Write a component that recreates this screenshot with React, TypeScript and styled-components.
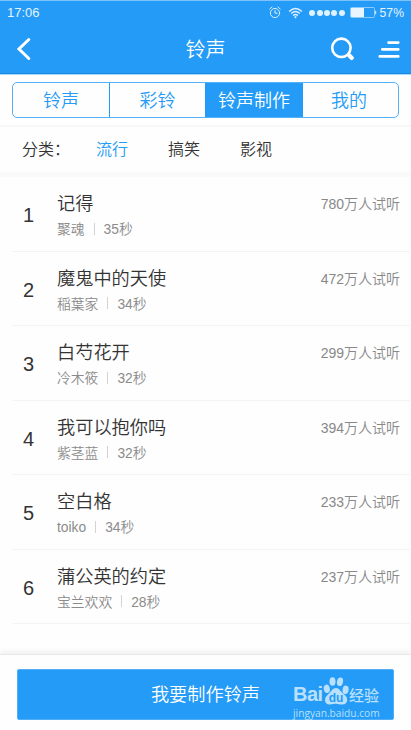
import React from 'react';
import styled, { createGlobalStyle } from 'styled-components';

const BLUE = '#249bf7';

const GlobalStyle = createGlobalStyle`
  *, *::before, *::after { box-sizing: border-box; }
  body { margin: 0; background: #fefefe; overflow: hidden; }
  button { font: inherit; border: 0; padding: 0; background: none; color: inherit; }
`;

const Screen = styled.div`
  width: 411px;
  height: 730px;
  display: flex;
  flex-direction: column;
  background: #fefefe;
  color: #333;
  font-family: 'Liberation Sans', 'Noto Sans CJK SC', sans-serif;
  font-weight: 350;
`;

const TopArea = styled.header`
  flex: none;
  height: 75px;
  background: ${BLUE};
  color: #fff;
  border-top: 1px solid #7cc3fb;
  border-bottom: 1px solid #a5d6fc;
  box-shadow: inset 0 -1px 0 #1b8ae4;
`;

const StatusBar = styled.div`
  height: 23px;
  display: flex;
  align-items: center;
  padding: 0 7px;
  font-size: 12.2px;
  font-weight: 400;
  color: #e4f3ff;
`;

const Clock = styled.span`
  flex: 1;
  font-size: 13px;
  line-height: 23px;
`;

const AlarmIcon = styled.svg`
  width: 12px;
  height: 13px;
  margin-right: 7px;
`;

const WifiIcon = styled.svg`
  width: 15px;
  height: 12px;
  margin-right: 6px;
`;

const Signal = styled.span`
  display: flex;
  gap: 1.3px;
  margin-right: 5px;
`;

const SignalDot = styled.i`
  width: 6px;
  height: 6px;
  border-radius: 50%;
  background: #e0f2ff;
`;

const BatteryIcon = styled.svg`
  width: 27px;
  height: 11px;
  margin-right: 3px;
`;

const NavBar = styled.div`
  height: 50px;
  display: grid;
  grid-template-columns: 80px 1fr 80px;
  align-items: center;
  padding: 0 11px 0 16px;
`;

const BackIcon = styled.svg`
  display: block;
  width: 16px;
  height: 24px;
`;

const Title = styled.h1`
  margin: 2px 0 0 -5px;
  text-align: center;
  font-size: 20px;
  font-weight: 350;
  line-height: 28px;
`;

const NavActions = styled.div`
  display: flex;
  justify-content: flex-end;
  align-items: center;
  gap: 22px;
`;

const SearchIcon = styled.svg`
  display: block;
  width: 25px;
  height: 24px;
`;

const MenuIcon = styled.svg`
  display: block;
  width: 23px;
  height: 20px;
`;

const TabBar = styled.nav`
  flex: none;
  height: 52px;
  padding: 7px 12px 0;
  border-bottom: 2px solid #f7f7f7;
`;

const TabGroup = styled.div`
  height: 36px;
  width: 387px;
  display: grid;
  grid-template-columns: 96px 96px 97px 1fr;
  border: 1px solid #55b2f9;
  border-radius: 5px;
  overflow: hidden;
`;

const Tab = styled.button<{ $active?: boolean }>`
  font-size: 18px;
  line-height: 32px;
  padding-top: 2px;
  color: ${({ $active }) => ($active ? '#fff' : BLUE)};
  background: ${({ $active }) => ($active ? BLUE : 'transparent')};
  & + & { border-left: 1px solid ${BLUE}; }
  &:last-child { padding-right: 3px; }
`;

const Categories = styled.nav`
  flex: none;
  height: 50px;
  display: flex;
  padding: 11px 22px 0;
  font-size: 16px;
  line-height: 24px;
  border-bottom: 5px solid #fafafa;
`;

const CategoryLabel = styled.span`
  width: 74px;
`;

const Category = styled.button<{ $active?: boolean }>`
  width: 72px;
  height: 24px;
  text-align: left;
  color: ${({ $active }) => ($active ? BLUE : 'inherit')};
`;

const SongList = styled.ol`
  flex: 1;
  margin: 0;
  padding: 0 1px 0 12px;
  list-style: none;
`;

const SongRow = styled.li`
  height: 74.5px;
  display: grid;
  grid-template-columns: 45px 1fr auto;
  padding-right: 10px;
  border-bottom: 1px solid #f4f4f4;
`;

const Rank = styled.span`
  padding: 22px 0 0 11px;
  font-size: 20px;
  line-height: 32px;
`;

const SongName = styled.h2`
  margin: 14px 0 0;
  font-size: 18.2px;
  font-weight: 350;
  line-height: 26px;
`;

const Meta = styled.div`
  display: flex;
  align-items: center;
  height: 25px;
  font-size: 13.8px;
  line-height: 25px;
  color: #8b8b8b;
`;

const Divider = styled.i`
  width: 1px;
  height: 12px;
  margin: -2px 9px 0;
  background: #d3d3d3;
`;

const Plays = styled.span`
  padding-top: 15px;
  font-size: 14px;
  line-height: 25px;
  color: #888;
`;

const Footer = styled.footer`
  position: relative;
  flex: none;
  height: 76px;
  padding: 14px 17px 0;
  border-top: 1px solid #e8e8e8;
  box-shadow: 0 -3px 5px rgba(0, 0, 0, 0.05);
`;

const MakeButton = styled.button`
  display: block;
  width: 377px;
  height: 51px;
  border: 1px solid #50aef8;
  border-radius: 2px;
  background: ${BLUE};
  color: #fff;
  font-size: 18.2px;
  line-height: 48px;
  padding-top: 1px;
`;

const Watermark = styled.div`
  position: absolute;
  left: 293px;
  top: 20px;
  width: 92px;
  color: #b9e0fd;
  font-weight: 400;
  pointer-events: none;
`;

const Brand = styled.div`
  display: flex;
  align-items: flex-end;
  height: 31px;
`;

const BrandLatin = styled.span`
  flex: none;
  width: 31px;
  font-family: 'Liberation Sans', sans-serif;
  font-size: 20px;
  letter-spacing: -0.5px;
  font-weight: 700;
  line-height: 23px;
`;

const BrandHan = styled.span`
  font-size: 15px;
  font-weight: 500;
  line-height: 20px;
  white-space: nowrap;
`;

const Paw = styled.svg`
  flex: none;
  width: 26px;
  height: 29px;
  margin: 0 0 1px -1px;
`;

const SiteAddress = styled.div`
  font-family: 'Open Sans', sans-serif;
  font-size: 10.2px;
  line-height: 14px;
  white-space: nowrap;
`;

const songs = [
  { name: '记得', artist: '聚魂', length: '35秒', plays: '780万人试听' },
  { name: '魔鬼中的天使', artist: '稲葉家', length: '34秒', plays: '472万人试听' },
  { name: '白芍花开', artist: '冷木筱', length: '32秒', plays: '299万人试听' },
  { name: '我可以抱你吗', artist: '紫茎蓝', length: '32秒', plays: '394万人试听' },
  { name: '空白格', artist: 'toiko', length: '34秒', plays: '233万人试听' },
  { name: '蒲公英的约定', artist: '宝兰欢欢', length: '28秒', plays: '237万人试听' },
];

const tabs = ['铃声', '彩铃', '铃声制作', '我的'];
const categories = ['流行', '搞笑', '影视'];

export default function App() {
  return (
    <Screen>
      <GlobalStyle />
      <TopArea>
        <StatusBar>
          <Clock>17:06</Clock>
          <AlarmIcon viewBox="0 0 12 13" fill="none" stroke="#dcf0ff" strokeLinecap="round">
            <circle cx="6" cy="7" r="4.6" />
            <path d="M6 4.5V7.2H8.2M.8 3 3 1M11.2 3 9 1" />
          </AlarmIcon>
          <WifiIcon viewBox="0 0 16 12" fill="none" stroke="#dcf0ff" strokeWidth="1.5">
            <path d="M1.2 4.3Q8-1.8 14.8 4.3M3.4 6.6Q8 2.4 12.6 6.6M5.5 8.8Q8 6.6 10.5 8.8" />
            <circle cx="8" cy="10.4" r="1.1" fill="#dcf0ff" stroke="none" />
          </WifiIcon>
          <Signal>
            {[0, 1, 2, 3, 4].map((dot) => <SignalDot key={dot} />)}
          </Signal>
          <BatteryIcon viewBox="0 0 27 11">
            <rect x=".5" y=".5" width="24" height="10" rx="1" fill="none" stroke="#8bcbfb" />
            <rect x="1" y="1" width="13" height="9" fill="#e8f5ff" />
            <path d="M25.5 3.8v3.4" stroke="#c4e5fd" strokeWidth="1.4" />
          </BatteryIcon>
          <span>57%</span>
        </StatusBar>
        <NavBar>
          <BackIcon viewBox="0 0 16 24" fill="none" stroke="#fff" strokeWidth="3" strokeLinecap="round" strokeLinejoin="miter">
            <path d="M12.8 2.500 3 12l9.800 9.500" />
          </BackIcon>
          <Title>铃声</Title>
          <NavActions>
            <SearchIcon viewBox="0 0 25 24" fill="none" stroke="#fff" strokeLinecap="round">
              <circle cx="11.4" cy="10.800" r="9.200" strokeWidth="2.600" />
              <path d="m18.800 18 3 2.900" strokeWidth="4.200" />
            </SearchIcon>
            <MenuIcon viewBox="0 0 23 20" fill="none" stroke="#fff" strokeWidth="2.600" strokeLinecap="round">
              <path d="M11.500 3.600H21.300M5.300 10.400H21.300M2.700 17.400H21.300" />
            </MenuIcon>
          </NavActions>
        </NavBar>
      </TopArea>
      <TabBar>
        <TabGroup>
          {tabs.map((tab) => <Tab key={tab} $active={tab === '铃声制作'}>{tab}</Tab>)}
        </TabGroup>
      </TabBar>
      <Categories>
        <CategoryLabel>分类：</CategoryLabel>
        {categories.map((name) => (
          <Category key={name} $active={name === '流行'}>{name}</Category>
        ))}
      </Categories>
      <SongList>
        {songs.map((song, index) => (
          <SongRow key={song.name}>
            <Rank>{index + 1}</Rank>
            <div>
              <SongName>{song.name}</SongName>
              <Meta>
                <span>{song.artist}</span>
                <Divider />
                <span>{song.length}</span>
              </Meta>
            </div>
            <Plays>{song.plays}</Plays>
          </SongRow>
        ))}
      </SongList>
      <Footer>
        <MakeButton>我要制作铃声</MakeButton>
        <Watermark>
          <Brand>
            <BrandLatin>Bai</BrandLatin>
            <Paw viewBox="0 0 26 29" fill="#b9e0fd">
              <ellipse cx="3.800" cy="12.800" rx="3" ry="4.200" transform="rotate(-12 3.800 12.800)" />
              <ellipse cx="9.500" cy="5.500" rx="3" ry="4.300" />
              <ellipse cx="17" cy="5.800" rx="3" ry="4.300" transform="rotate(12 17 5.800)" />
              <ellipse cx="22.600" cy="13.800" rx="3" ry="4.200" transform="rotate(8 22.600 13.800)" />
              <path d="M13 12c-3.200 0-4.400 3-7 5.400C3.800 19.500 2 21 2 24c0 3 2 4.800 5 4.600 2.400-.2 3.800-.8 6-.8s3.800.8 6.200.8c3.400 0 5-2 5-4.800 0-3-2.200-4.800-4.600-6.800C17 14.900 16.200 12 13 12z" />
              <text x="13" y="26" fill={BLUE} fontFamily="Liberation Sans, sans-serif" fontSize="12" fontWeight="700" textAnchor="middle">du</text>
            </Paw>
            <BrandHan>经验</BrandHan>
          </Brand>
          <SiteAddress>jingyan.baidu.com</SiteAddress>
        </Watermark>
      </Footer>
    </Screen>
  );
}
